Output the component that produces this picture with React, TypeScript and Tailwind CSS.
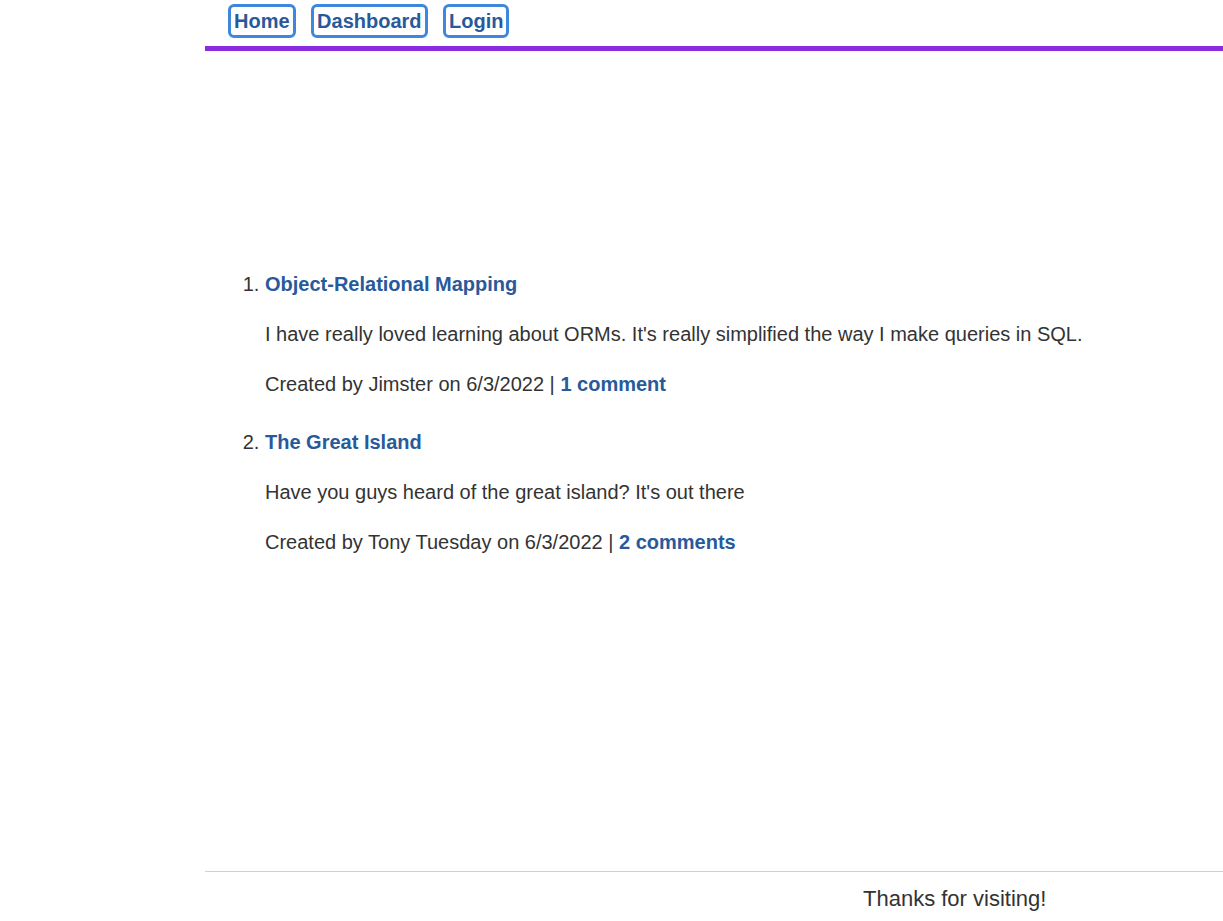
const posts = [
  {
    title: "Object-Relational Mapping",
    body: "I have really loved learning about ORMs. It's really simplified the way I make queries in SQL.",
    author: "Jimster",
    date: "6/3/2022",
    comments: "1 comment",
  },
  {
    title: "The Great Island",
    body: "Have you guys heard of the great island? It's out there",
    author: "Tony Tuesday",
    date: "6/3/2022",
    comments: "2 comments",
  },
];

function NavLink(props: { children: React.ReactNode }) {
  return (
    <a
      href="#"
      className="rounded-[6px] border-[3px] border-[#3f87dc] px-[3px] text-[20px] font-bold leading-[28px] text-[#285a9b]"
    >
      {props.children}
    </a>
  );
}

export default function App() {
  return (
    <div className="flex min-h-[921px] flex-col bg-white pl-[205px] font-['Liberation_Sans',Arial,sans-serif] text-[#333]">
      <header className="flex gap-[15.5px] border-b-[5px] border-[#8a2be2] pb-[8px] pl-[23px] pt-[4px]">
        <NavLink>Home</NavLink>
        <NavLink>Dashboard</NavLink>
        <NavLink>Login</NavLink>
      </header>

      <main className="flex-1 pt-[218px]">
        <ol className="list-decimal pl-[60px] text-[20px] leading-[30px]">
          {posts.map((post) => (
            <li key={post.title} className="mb-[28px]">
              <a href="#" className="font-bold text-[#285a9b]">
                {post.title}
              </a>
              <p className="mt-[20px]">{post.body}</p>
              <p className="mt-[20px]">
                Created by {post.author} on {post.date} |{" "}
                <a href="#" className="font-bold text-[#285a9b]">
                  {post.comments}
                </a>
              </p>
            </li>
          ))}
        </ol>
      </main>

      <footer className="border-t border-[#d0d0d0] pb-[9px] pt-[14px]">
        <p className="pl-[658px] text-[22px] leading-[26px]">Thanks for visiting!</p>
      </footer>
    </div>
  );
}
